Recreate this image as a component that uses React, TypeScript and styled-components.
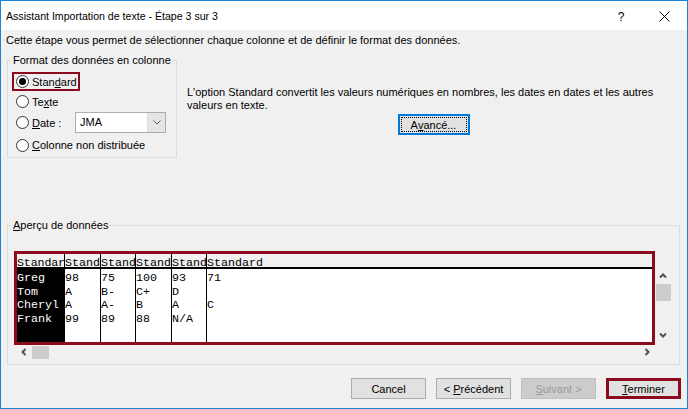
import React from 'react';
import styled, { createGlobalStyle } from 'styled-components';

const UI_FONT = `"Segoe UI", "Liberation Sans", Arial, sans-serif`;
const MONO = `"Liberation Mono", "Courier New", monospace`;
const RED = '#8c0a1e';

const Global = createGlobalStyle`
  html, body { margin: 0; padding: 0; background: #f0f0f0; }
  body { font-family: ${UI_FONT}; font-size: 11px; color: #000; }
  * { box-sizing: border-box; }
`;

const Window = styled.div`
  width: 688px;
  height: 409px;
  border: 1px solid #1c83d4;
  display: flex;
  flex-direction: column;
  background: #f0f0f0;
  overflow: hidden;
`;

const TitleBar = styled.div`
  height: 29px;
  flex-shrink: 0;
  background: #fff;
  display: flex;
  align-items: center;
  padding-top: 2px;
`;

const TitleText = styled.div`
  flex: 1;
  margin-left: 5px;
  font-size: 10.6px;
  line-height: 15px;
  white-space: nowrap;
`;

const TitleButton = styled.div<{ $w: number }>`
  width: ${(p) => p.$w}px;
  height: 100%;
  display: flex;
  align-items: center;
  justify-content: center;
  font-size: 12px;
`;

const Body = styled.div`
  flex: 1;
  display: flex;
  flex-direction: column;
  padding: 0 7px 0 5px;
`;

const Intro = styled.p`
  margin: 3px 0 0;
  line-height: 15px;
  white-space: nowrap;
`;

const TopRow = styled.div`
  display: flex;
  align-items: flex-start;
  margin-top: 5px;
`;

const GroupBox = styled.fieldset<{ $w?: number; $mt?: number }>`
  margin: ${(p) => p.$mt ?? 0}px 0 0 1px;
  padding: 0;
  min-width: 0;
  border: 1px solid #dcdcdc;
  ${(p) => (p.$w ? `width: ${p.$w}px; flex-shrink: 0;` : '')}
`;

const GroupTitle = styled.legend`
  margin-left: 4px;
  padding: 0 1px;
  line-height: 14px;
  font-size: 11px;
  white-space: nowrap;
`;

const OptionList = styled.div`
  display: flex;
  flex-direction: column;
  padding: 5px 0 0 4px;
`;

const OptionRow = styled.div<{ $h: number; $focus?: boolean }>`
  height: ${(p) => p.$h}px;
  display: flex;
  align-items: center;
  white-space: nowrap;
  padding-left: 4px;
  ${(p) => (p.$focus ? `border: 2px solid ${RED}; padding-left: 2px; width: 68px;` : '')}
`;

const Radio = styled.span<{ $checked?: boolean }>`
  width: 13px;
  height: 13px;
  flex-shrink: 0;
  margin-right: 3px;
  border-radius: 50%;
  border: 1px solid #333;
  background: #fff;
  display: flex;
  align-items: center;
  justify-content: center;
  &::after {
    content: '';
    width: 7px;
    height: 7px;
    border-radius: 50%;
    background: ${(p) => (p.$checked ? '#000' : 'transparent')};
  }
`;

const DateLabel = styled.span`
  width: 43px;
  flex-shrink: 0;
`;

const Combo = styled.div`
  width: 91px;
  height: 21px;
  border: 1px solid #adadad;
  background: #fff;
  display: flex;
`;

const ComboValue = styled.div`
  flex: 1;
  padding-left: 4px;
  line-height: 19px;
`;

const ComboButton = styled.div`
  width: 18px;
  background: #e5e5e5;
  border-left: 1px solid #dcdcdc;
  display: flex;
  align-items: center;
  justify-content: center;
`;

const Explain = styled.div`
  flex: 1;
  margin-left: 10px;
  padding-top: 32.5px;
  display: flex;
  flex-direction: column;
  align-items: center;
`;

const ExplainText = styled.p`
  align-self: stretch;
  margin: 0;
  line-height: 13px;
  white-space: nowrap;
`;

const AdvancedButton = styled.button`
  margin-top: 2.5px;
  width: 72px;
  height: 21px;
  padding: 1px;
  border: 2px solid #0078d7;
  background: #e1e1e1;
  font-family: ${UI_FONT};
  font-size: 11px;
  color: #000;
  display: flex;
`;

const FocusRing = styled.span`
  flex: 1;
  border: 1px dotted #000;
  display: flex;
  align-items: center;
  justify-content: center;
`;

const Key = styled.span`
  text-decoration: underline;
`;

const PreviewLayout = styled.div`
  display: grid;
  grid-template-columns: 641px 16px;
  grid-template-rows: 94px 14px;
  padding: 19px 0 5px 6px;
`;

const DataGrid = styled.div`
  border: 3px solid ${RED};
  background: #fff;
  display: grid;
  grid-template-columns: 48px 36px 35px 36px 35px 1fr;
  font-family: ${MONO};
  font-size: 11.67px;
  overflow: hidden;
`;

const DataColumn = styled.div<{ $last?: boolean }>`
  display: flex;
  flex-direction: column;
  min-width: 0;
  border-right: ${(p) => (p.$last ? 'none' : '1px solid #000')};
`;

const HeaderCell = styled.div<{ $tight?: boolean }>`
  height: 15px;
  padding-top: 3px;
  line-height: 13.7px;
  background: #f0f0f0;
  border-bottom: 2px solid #000;
  white-space: nowrap;
  ${(p) => (p.$tight ? 'letter-spacing: -0.15px;' : '')}
`;

const CellStack = styled.div<{ $dark?: boolean }>`
  flex: 1;
  padding-top: 3px;
  background: ${(p) => (p.$dark ? '#000' : '#fff')};
  color: ${(p) => (p.$dark ? '#fff' : '#000')};
`;

const Cell = styled.div`
  height: 13.7px;
  line-height: 13.7px;
  white-space: pre;
`;

const VScroll = styled.div`
  display: flex;
  flex-direction: column;
  align-items: center;
  padding: 17px 0 2px;
`;

const HScroll = styled.div`
  display: flex;
  align-items: center;
  padding-left: 2px;
  min-width: 0;
`;

const ArrowBox = styled.div`
  width: 16px;
  height: 16px;
  flex-shrink: 0;
  display: flex;
  align-items: center;
  justify-content: center;
`;

const Thumb = styled.div<{ $vertical?: boolean }>`
  background: #cdcdcd;
  flex-shrink: 0;
  width: ${(p) => (p.$vertical ? 15 : 17)}px;
  height: ${(p) => (p.$vertical ? 17 : 13)}px;
`;

const Spacer = styled.div`
  flex: 1;
`;

const Footer = styled.div`
  display: flex;
  justify-content: flex-end;
  gap: 10px;
  margin: 13px -1px 0 0;
`;

const DialogButton = styled.button<{ $default?: boolean }>`
  width: 75px;
  height: 21px;
  padding: 0;
  font-family: ${UI_FONT};
  font-size: 11px;
  color: #000;
  background: #e1e1e1;
  border: 1px solid #adadad;
  ${(p) => (p.$default ? `border: 3px solid ${RED};` : '')}
  &:disabled {
    background: #cccccc;
    border-color: #bfbfbf;
    color: #9a9a9a;
  }
`;

type Dir = 'up' | 'down' | 'left' | 'right';
const Chevron = ({ dir }: { dir: Dir }) => {
  const pts: Record<Dir, string> = {
    up: '1,5.5 4,2.5 7,5.5',
    down: '1,2.5 4,5.5 7,2.5',
    left: '5.5,1 2.5,4 5.5,7',
    right: '2.5,1 5.5,4 2.5,7',
  };
  return (
    <svg width="8" height="8" viewBox="0 0 8 8">
      <polyline points={pts[dir]} fill="none" stroke="#505050" strokeWidth="2" />
    </svg>
  );
};

const columns = [
  { head: 'Standar', cells: ['Greg', 'Tom', 'Cheryl', 'Frank'], dark: true },
  { head: 'Stand', cells: ['98', 'A', 'A', '99'] },
  { head: 'Stand', cells: ['75', 'B-', 'A-', '89'] },
  { head: 'Stand', cells: ['100', 'C+', 'B', '88'] },
  { head: 'Stand', cells: ['93', 'D', 'A', 'N/A'] },
  { head: 'Standard', cells: ['71', '', 'C', ''] },
];

export default function App() {
  return (
    <>
      <Global />
      <Window>
        <TitleBar>
          <TitleText>Assistant Importation de texte - Étape 3 sur 3</TitleText>
          <TitleButton $w={40}>?</TitleButton>
          <TitleButton $w={46}>
            <svg width="11" height="11" viewBox="0 0 11 11">
              <path d="M0.5 0.5 L10.5 10.5 M10.5 0.5 L0.5 10.5" stroke="#000" strokeWidth="1" />
            </svg>
          </TitleButton>
        </TitleBar>
        <Body>
          <Intro>Cette étape vous permet de sélectionner chaque colonne et de définir le format des données.</Intro>
          <TopRow>
            <GroupBox $w={170}>
              <GroupTitle>Format des données en colonne</GroupTitle>
              <OptionList>
                <OptionRow $h={19} $focus>
                  <Radio $checked />
                  <span>
                    Stan<Key>d</Key>ard
                  </span>
                </OptionRow>
                <OptionRow $h={21}>
                  <Radio />
                  <span>
                    Te<Key>x</Key>te
                  </span>
                </OptionRow>
                <OptionRow $h={21}>
                  <Radio />
                  <DateLabel>
                    <Key>D</Key>ate :
                  </DateLabel>
                  <Combo>
                    <ComboValue>JMA</ComboValue>
                    <ComboButton>
                      <svg width="8" height="5" viewBox="0 0 8 5">
                        <polyline points="0.5,0.5 4,4 7.5,0.5" fill="none" stroke="#606060" strokeWidth="1" />
                      </svg>
                    </ComboButton>
                  </Combo>
                </OptionRow>
                <OptionRow $h={24}>
                  <Radio />
                  <span>
                    <Key>C</Key>olonne non distribuée
                  </span>
                </OptionRow>
              </OptionList>
            </GroupBox>
            <Explain>
              <ExplainText>
                L'option Standard convertit les valeurs numériques en nombres, les dates en dates et les autres
                <br />
                valeurs en texte.
              </ExplainText>
              <AdvancedButton>
                <FocusRing>
                  A<Key>v</Key>ancé...
                </FocusRing>
              </AdvancedButton>
            </Explain>
          </TopRow>
          <GroupBox $mt={60}>
            <GroupTitle>
              <Key>A</Key>perçu de données
            </GroupTitle>
            <PreviewLayout>
              <DataGrid>
                {columns.map((c, i) => (
                  <DataColumn key={i} $last={i === columns.length - 1}>
                    <HeaderCell $tight={i === 0}>{c.head}</HeaderCell>
                    <CellStack $dark={c.dark}>
                      {c.cells.map((v, j) => (
                        <Cell key={j}>{v}</Cell>
                      ))}
                    </CellStack>
                  </DataColumn>
                ))}
              </DataGrid>
              <VScroll>
                <ArrowBox>
                  <Chevron dir="up" />
                </ArrowBox>
                <Thumb $vertical />
                <Spacer />
                <ArrowBox>
                  <Chevron dir="down" />
                </ArrowBox>
              </VScroll>
              <HScroll>
                <ArrowBox>
                  <Chevron dir="left" />
                </ArrowBox>
                <Thumb />
                <Spacer />
                <ArrowBox>
                  <Chevron dir="right" />
                </ArrowBox>
              </HScroll>
            </PreviewLayout>
          </GroupBox>
          <Footer>
            <DialogButton>Cancel</DialogButton>
            <DialogButton>
              &lt; <Key>P</Key>récédent
            </DialogButton>
            <DialogButton disabled>
              <Key>S</Key>uivant &gt;
            </DialogButton>
            <DialogButton $default>
              <Key>T</Key>erminer
            </DialogButton>
          </Footer>
        </Body>
      </Window>
    </>
  );
}
